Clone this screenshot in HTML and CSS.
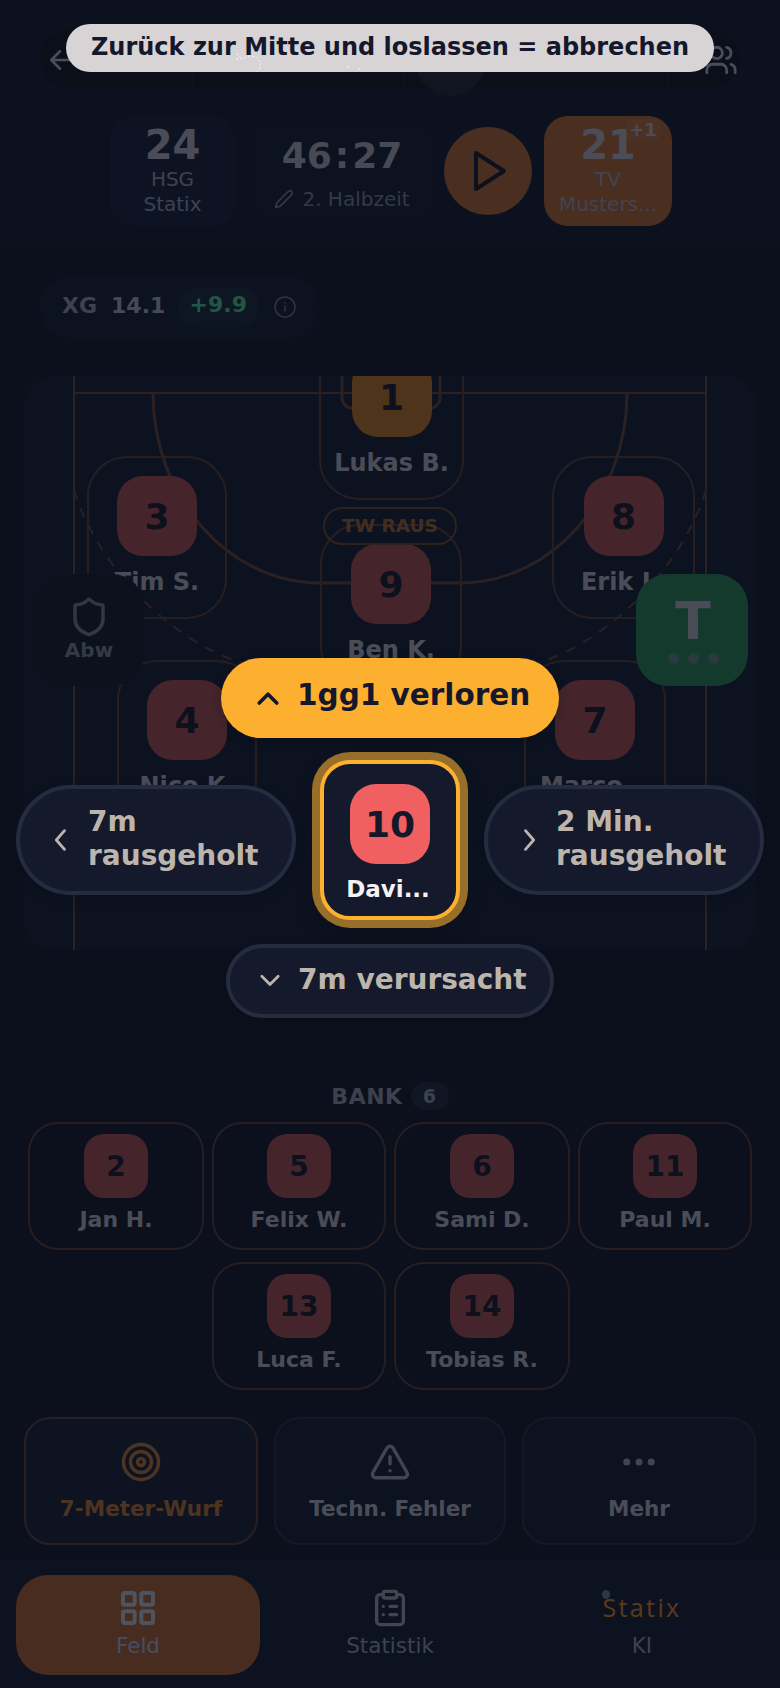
FILE: index.html
```html
<!DOCTYPE html>
<html lang="de">
<head>
<meta charset="utf-8">
<title>Statix Feld</title>
<link rel="stylesheet" href="styles.css">
</head>
<body>
<div class="app">
  <section class="top">
    <header class="hdr">
      <div class="seg seg-a">
        <svg class="ic-back" viewBox="0 0 24 24"><path d="M19 12H5M12 19l-7-7 7-7"/></svg>
      </div>
      <div class="seg seg-b"></div>
      <div class="seg seg-b"></div>
      <div class="seg seg-c"><span class="ball"></span></div>
      <div class="seg seg-d">
        <svg class="ic-users" viewBox="0 0 24 24"><path d="M16 21v-2a4 4 0 0 0-4-4H6a4 4 0 0 0-4 4v2"/><circle cx="9" cy="7" r="4"/><path d="M22 21v-2a4 4 0 0 0-3-3.87M16 3.13a4 4 0 0 1 0 7.75"/></svg>
      </div>
    </header>
    <div class="score">
      <div class="team">
        <div class="team-num">24</div>
        <div class="team-name">HSG<br>Statix</div>
      </div>
      <div class="timer">
        <div class="clock">46<span class="colon">:</span>27</div>
        <div class="half">
          <svg class="ic-pen" viewBox="0 0 24 24"><path d="M17 3a2.83 2.83 0 1 1 4 4L7.5 20.5 2 22l1.5-5.5z"/></svg>
          <span>2. Halbzeit</span>
        </div>
      </div>
      <div class="play">
        <svg class="ic-play" viewBox="0 0 24 24"><path d="M6 3l14 9-14 9z"/></svg>
      </div>
      <div class="team team-away">
        <div class="team-num">21<span class="plus">+1</span></div>
        <div class="team-name">TV<br>Musters...</div>
      </div>
    </div>
  </section>

  <div class="xg">
    <span class="xg-k">XG</span>
    <span class="xg-v">14.1</span>
    <span class="xg-d">+9.9</span>
    <svg class="ic-info" viewBox="0 0 24 24"><circle cx="12" cy="12" r="10"/><path d="M12 16v-5M12 8h.01"/></svg>
  </div>

  <section class="field">
    <svg class="court" viewBox="0 0 732 574">
      <path d="M50 0V574M682 0V574M50 17H682"/>
      <path class="goal" d="M318 0V22a10 10 0 0 0 10 10H406a10 10 0 0 0 10-10V0"/>
      <path class="arc" d="M129 17C129 121 204 207 296 207H436C528 207 603 121 603 17"/>
      <path class="dash" d="M50 114C71 184 141 264 221 288M682 114C661 184 591 264 511 288"/>
    </svg>
    <div class="player p-gk"><div class="badge badge-gk">1</div><div class="name">Lukas B.</div></div>
    <div class="player p-3"><div class="badge">3</div><div class="name">Tim S.</div></div>
    <div class="player p-8"><div class="badge">8</div><div class="name">Erik L.</div></div>
    <div class="player p-9"><div class="badge">9</div><div class="name">Ben K.</div></div>
    <div class="player p-4"><div class="badge">4</div><div class="name">Nico K.</div></div>
    <div class="player p-7"><div class="badge">7</div><div class="name">Marco...</div></div>
    <div class="tw-chip">TW RAUS</div>
    <div class="abw">
      <svg class="ic-shield" viewBox="0 0 24 24"><path d="M20 13c0 5-3.5 7.5-7.66 8.95a1 1 0 0 1-.67-.01C7.5 20.5 4 18 4 13V6a1 1 0 0 1 1-1c2 0 4.5-1.2 6.24-2.72a1.17 1.17 0 0 1 1.52 0C14.51 3.81 17 5 19 5a1 1 0 0 1 1 1z"/></svg>
      <span>Abw</span>
    </div>
    <div class="timeout">
      <span class="t-letter">T</span>
      <span class="t-dots"><i></i><i></i><i></i></span>
    </div>
  </section>

  <section class="bank">
    <div class="bank-head"><span>BANK</span><span class="bank-count">6</span></div>
    <div class="bank-grid">
      <div class="sub"><div class="sub-num">2</div><div class="sub-name">Jan H.</div></div>
      <div class="sub"><div class="sub-num">5</div><div class="sub-name">Felix W.</div></div>
      <div class="sub"><div class="sub-num">6</div><div class="sub-name">Sami D.</div></div>
      <div class="sub"><div class="sub-num">11</div><div class="sub-name">Paul M.</div></div>
      <div class="sub sub-r2a"><div class="sub-num">13</div><div class="sub-name">Luca F.</div></div>
      <div class="sub"><div class="sub-num">14</div><div class="sub-name">Tobias R.</div></div>
    </div>
  </section>

  <section class="actions">
    <div class="action action-on">
      <svg class="ic-act" viewBox="0 0 24 24"><circle cx="12" cy="12" r="10"/><circle cx="12" cy="12" r="6"/><circle cx="12" cy="12" r="2"/></svg>
      <span>7-Meter-Wurf</span>
    </div>
    <div class="action">
      <svg class="ic-act" viewBox="0 0 24 24"><path d="M21.73 18l-8-14a2 2 0 0 0-3.48 0l-8 14A2 2 0 0 0 4 21h16a2 2 0 0 0 1.73-3M12 9v4M12 17h.01"/></svg>
      <span>Techn. Fehler</span>
    </div>
    <div class="action">
      <svg class="ic-act" viewBox="0 0 24 24"><circle cx="12" cy="12" r="1"/><circle cx="19" cy="12" r="1"/><circle cx="5" cy="12" r="1"/></svg>
      <span>Mehr</span>
    </div>
  </section>

  <nav class="nav">
    <div class="tab tab-on">
      <svg class="ic-tab" viewBox="0 0 24 24"><rect x="3" y="3" width="7" height="7" rx="1"/><rect x="14" y="3" width="7" height="7" rx="1"/><rect x="14" y="14" width="7" height="7" rx="1"/><rect x="3" y="14" width="7" height="7" rx="1"/></svg>
      <span>Feld</span>
    </div>
    <div class="tab">
      <svg class="ic-tab" viewBox="0 0 24 24"><rect x="8" y="2" width="8" height="4" rx="1"/><path d="M16 4h2a2 2 0 0 1 2 2v14a2 2 0 0 1-2 2H6a2 2 0 0 1-2-2V6a2 2 0 0 1 2-2h2M12 11h4M12 16h4M8 11h.01M8 16h.01"/></svg>
      <span>Statistik</span>
    </div>
    <div class="tab">
      <div class="logo"><i class="logo-dot"></i>Statix</div>
      <span>KI</span>
    </div>
  </nav>

  <div class="scrim"></div>

  <div class="toast">
    Zurück zur Mitte und loslassen = abbrechen
    <svg class="toast-dots" viewBox="0 0 130 24"><path d="M2 6l5 5M2 11h6a10 9 0 1 1 0 12M112 19h2M124 21h4"/></svg>
  </div>

  <div class="radial">
    <div class="opt opt-up">
      <svg class="chev" viewBox="0 0 24 24"><path d="M5 16l7-7 7 7"/></svg>
      <span>1gg1 verloren</span>
    </div>
    <div class="opt opt-left">
      <svg class="chev" viewBox="0 0 24 24"><path d="M15 4l-7 8 7 8"/></svg>
      <span>7m<br>rausgeholt</span>
    </div>
    <div class="center-card">
      <div class="center-num">10</div>
      <div class="center-name">Davi...</div>
    </div>
    <div class="opt opt-right">
      <svg class="chev" viewBox="0 0 24 24"><path d="M9 4l7 8-7 8"/></svg>
      <span>2 Min.<br>rausgeholt</span>
    </div>
    <div class="opt opt-down">
      <svg class="chev" viewBox="0 0 24 24"><path d="M5 8l7 7 7-7"/></svg>
      <span>7m verursacht</span>
    </div>
  </div>
</div>
</body>
</html>
```

FILE: styles.css
```css
* { box-sizing: border-box; }
html, body { margin: 0; padding: 0; }
body {
  width: 780px;
  height: 1688px;
  overflow: hidden;
  background: #0d1220;
  font-family: "DejaVu Sans", sans-serif;
  color: #c1c0cb;
}
svg { display: block; fill: none; stroke: currentColor; stroke-width: 2; stroke-linecap: round; stroke-linejoin: round; }

.app { position: relative; width: 780px; height: 1688px; display: flex; flex-direction: column; }

/* header */
.top { height: 243px; background: #10162a; }
.hdr { display: flex; height: 58px; margin: 30px 40px 0; border-radius: 30px; background: #0d101c; }
.seg { position: relative; display: flex; align-items: center; border-left: 1px solid #171b28; }
.seg-a { width: 152px; border-left: 0; padding-left: 5px; padding-top: 2px; }
.seg-b { width: 106px; }
.seg-c { width: 263px; }
.seg-d { flex: 1; padding-left: 36px; padding-top: 2px; }
.ic-back { width: 30px; height: 30px; color: #c1c0cb; }
.ic-users { width: 34px; height: 34px; color: #c1c0cb; }
.ball { position: absolute; left: 10px; top: -6px; width: 71px; height: 72px; border-radius: 50%; background: #1d2029; }

.score { display: flex; align-items: center; height: 110px; margin-top: 28px; padding-left: 110px; gap: 12px; }
.team { width: 125px; height: 110px; border-radius: 24px; background: #131c32; display: flex; flex-direction: column; align-items: center; padding-top: 6px; }
.team-away { width: 128px; background: #c1682b; margin-left: 0; }
.team-num { position: relative; font-size: 40px; font-weight: 700; line-height: 46px; }
.plus { position: absolute; left: 46px; top: -3px; padding: 0 3px; font-size: 18px; line-height: 22px; background: rgba(255,255,255,.08); border-radius: 6px; }
.team-name { margin-top: -1px; font-size: 20px; line-height: 25px; text-align: center; color: #9fa1b4; }
.team-away .team-name { color: #a0a6bc; }
.timer { width: 180px; height: 97px; margin-left: 5px; border-radius: 24px; background: #10182c; display: flex; flex-direction: column; align-items: center; padding-top: 12px; }
.clock { font-size: 36px; font-weight: 700; line-height: 42px; color: #b7b6c2; }
.colon { margin: 0 3px; }
.half { display: flex; align-items: center; gap: 8px; margin-top: 10px; font-size: 20px; line-height: 24px; color: #828798; }
.ic-pen { width: 20px; height: 20px; }
.play { width: 88px; height: 88px; border-radius: 50%; background: #c1682b; display: flex; align-items: center; justify-content: center; }
.ic-play { width: 48px; height: 48px; color: #0f1424; }

/* xg */
.xg { display: flex; align-items: center; align-self: flex-start; height: 62px; margin: 33px 0 0 40px; padding: 0 22px; border-radius: 31px; background: #10182c; font-size: 22px; font-weight: 700; }
.xg-k { color: #9fa1b4; position: relative; top: -2px; }
.xg-v { margin-left: 14px; color: #b7b6c2; position: relative; top: -2px; }
.xg-d { margin-left: 12px; width: 82px; height: 40px; line-height: 36px; text-align: center; border-radius: 20px; background: #162036; color: #51d798; }
.ic-info { width: 24px; height: 24px; margin-left: 14px; color: #6e7488; stroke-width: 1.6; }

/* field */
.field { position: relative; height: 574px; margin: 38px 24px 0; border-radius: 30px; background: #10182c; overflow: hidden; }
.court { position: absolute; inset: 0; width: 732px; height: 574px; color: #684031; stroke-linecap: butt; }
.goal { stroke-width: 3; }
.arc { stroke-width: 3; }
.dash { stroke-dasharray: 10 9; }

.player { position: absolute; width: 140px; height: 163px; border: 2px solid #5a3a30; border-radius: 40px; display: flex; flex-direction: column; align-items: center; padding-top: 18px; }
.p-gk { left: 295px; top: -39px; width: 145px; }
.p-3 { left: 63px; top: 80px; }
.p-8 { left: 528px; top: 80px; width: 143px; }
.p-9 { left: 296px; top: 148px; width: 142px; }
.p-4 { left: 93px; top: 284px; }
.p-7 { left: 500px; top: 284px; width: 142px; }
.badge { width: 80px; height: 80px; flex: none; border-radius: 26px; background: #b34b4d; color: #0f1424; font-size: 36px; font-weight: 700; display: flex; align-items: center; justify-content: center; }
.badge-gk { background: #cc7a1a; }
.name { margin-top: 12px; font-size: 24px; line-height: 28px; font-weight: 700; white-space: nowrap; }

.tw-chip { position: absolute; left: 299px; top: 131px; width: 134px; height: 38px; border: 2px solid #6d4626; border-radius: 19px; color: #a9692a; font-size: 18.5px; line-height: 34px; font-weight: 700; text-align: center; }

.abw { position: absolute; left: 10px; top: 198px; width: 110px; height: 112px; border-radius: 32px; background: #0f1526; display: flex; flex-direction: column; align-items: center; padding-top: 22px; color: #848898; font-size: 20px; font-weight: 700; }
.ic-shield { width: 42px; height: 42px; margin-bottom: 0; color: #7c8090; }
.timeout { position: absolute; left: 612px; top: 198px; width: 112px; height: 112px; border-radius: 32px; background: #278a53; display: flex; flex-direction: column; align-items: center; padding-top: 17px; }
.t-letter { font-size: 52px; line-height: 60px; font-weight: 700; color: #c1c0cb; padding-left: 2px; }
.t-dots { display: flex; gap: 9px; margin-top: 2px; padding-left: 2px; }
.t-dots i { width: 11px; height: 11px; border-radius: 50%; background: #5e8c80; }

/* bank */
.bank { margin-top: 132px; }
.bank-head { display: flex; align-items: center; justify-content: center; gap: 8px; height: 28px; color: #9a9cac; font-size: 22px; font-weight: 700; letter-spacing: .5px; }
.bank-count { width: 38px; height: 28px; border-radius: 14px; background: #1a2338; text-align: center; line-height: 28px; font-size: 19px; }
.bank-grid { display: grid; grid-template-columns: 176px 174px 176px 174px; column-gap: 8px; row-gap: 12px; margin: 12px 0 0 28px; }
.sub { height: 128px; border: 2px solid #5a3a30; border-radius: 30px; display: flex; flex-direction: column; align-items: center; padding-top: 10px; }
.sub-r2a { grid-column: 2; }
.sub-num { width: 64px; height: 64px; border-radius: 20px; background: #b34b4d; color: #0f1424; font-size: 28px; font-weight: 700; display: flex; align-items: center; justify-content: center; }
.sub-name { margin-top: 8px; font-size: 22px; line-height: 28px; font-weight: 700; white-space: nowrap; }

/* actions */
.actions { display: grid; grid-template-columns: 234px 232px 234px; column-gap: 16px; margin: 27px 0 0 24px; }
.action { height: 128px; border: 2px solid #262c40; border-radius: 26px; background: #10182c; display: flex; flex-direction: column; align-items: center; padding-top: 22px; font-size: 21.5px; line-height: 26px; font-weight: 700; }
.action-on { border-color: #5e3c2c; background: #141b30; color: #c8762b; }
.ic-act { width: 42px; height: 42px; margin-bottom: 13px; color: #a8a8b4; }
.action-on .ic-act { color: #c8762b; }

/* nav */
.nav { display: grid; grid-template-columns: repeat(3, 244px); column-gap: 8px; height: 126px; margin-top: 16px; padding: 14px 16px 0; background: #12192c; }
.tab { height: 100px; border-radius: 32px; display: flex; flex-direction: column; align-items: center; padding-top: 13px; font-size: 21.5px; line-height: 24px; color: #99a0b4; }
.tab-on { background: #b8622a; color: #b0c4e8; }
.ic-tab { width: 40px; height: 40px; margin-bottom: 6px; color: #a8a8b4; }
.tab-on .ic-tab { color: #c8d0e0; stroke-width: 2.4; }
.logo { position: relative; width: 80px; height: 40px; margin-bottom: 6px; padding-top: 3px; text-align: center; color: #ee8a1a; font-size: 25px; line-height: 32px; letter-spacing: 2.4px; font-family: "Open Sans", sans-serif; font-weight: 400; }
.logo-dot { position: absolute; left: 0; top: 2px; width: 8px; height: 9px; border-radius: 50%; background: #6e7ea0; }

/* drag overlay */
.scrim { position: absolute; inset: 0; background: rgba(10,15,26,.65); }
.toast { position: absolute; left: 66px; top: 24px; width: 648px; height: 48px; border-radius: 24px; background: #d8d4d6; color: #14182a; font-size: 24px; font-weight: 700; line-height: 46px; text-align: center; white-space: nowrap; }
.toast-dots { position: absolute; left: 169px; top: 24px; width: 130px; height: 24px; color: #fff; stroke-width: 1; stroke-dasharray: 1 3; }

.opt { position: absolute; display: flex; align-items: center; border: 4px solid #252c40; background: #141a2c; color: #bdb5ad; font-size: 28px; line-height: 34px; font-weight: 700; white-space: nowrap; box-shadow: 0 4px 12px rgba(0,0,0,.15); }
.opt span { position: relative; top: -1px; }
.chev { flex: none; stroke-width: 2.4; }
.opt-up { left: 221px; top: 658px; width: 338px; height: 80px; padding-left: 32px; gap: 14px; border: 0; border-radius: 40px; background: #fdb030; color: #14182a; font-size: 29.5px; }
.opt-up span { top: -3px; }
.opt-up .chev { width: 30px; height: 30px; stroke-width: 3; }
.opt-left { left: 16px; top: 785px; width: 280px; height: 110px; padding-left: 27px; gap: 13px; border-radius: 55px; }
.opt-right { left: 484px; top: 785px; width: 280px; height: 110px; padding-left: 27px; gap: 13px; border-radius: 55px; }
.opt-left .chev, .opt-right .chev { width: 28px; height: 28px; }
.opt-down { left: 226px; top: 944px; width: 328px; height: 74px; padding-left: 26px; gap: 14px; border-radius: 37px; }
.opt-down .chev { width: 28px; height: 28px; }

.center-card { position: absolute; left: 320px; top: 760px; width: 140px; height: 160px; border: 4px solid #fdb030; border-radius: 30px; background: #141a2c; box-shadow: 0 0 0 8px #976f2a, 0 10px 24px rgba(0,0,0,.3); display: flex; flex-direction: column; align-items: center; padding-top: 20px; }
.center-num { width: 80px; height: 80px; border-radius: 26px; background: #f06060; color: #14182a; font-size: 36px; font-weight: 700; display: flex; align-items: center; justify-content: center; }
.center-name { margin-top: 11px; margin-right: 4px; color: #f4f2f2; font-size: 23px; line-height: 28px; font-weight: 700; }
```
